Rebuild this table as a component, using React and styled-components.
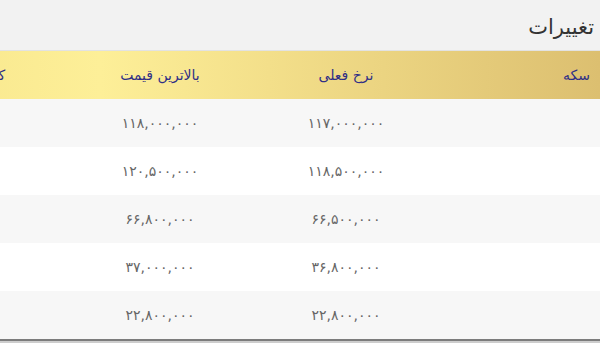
import styled, { createGlobalStyle } from 'styled-components';

const GlobalStyle = createGlobalStyle`
  html, body {
    margin: 0;
    padding: 0;
    background: #cdcdcd;
  }
  body {
    font-family: "DejaVu Sans", "Noto Sans", sans-serif;
  }
`;

const columns = ['سکه', 'نرخ فعلی', 'بالاترین قیمت', 'کمترین قیمت'];

const rows = [
  { current: '۱۱۷,۰۰۰,۰۰۰', high: '۱۱۸,۰۰۰,۰۰۰' },
  { current: '۱۱۸,۵۰۰,۰۰۰', high: '۱۲۰,۵۰۰,۰۰۰' },
  { current: '۶۶,۵۰۰,۰۰۰', high: '۶۶,۸۰۰,۰۰۰' },
  { current: '۳۶,۸۰۰,۰۰۰', high: '۳۷,۰۰۰,۰۰۰' },
  { current: '۲۲,۸۰۰,۰۰۰', high: '۲۲,۸۰۰,۰۰۰' },
];

export default function App() {
  return (
    <>
      <GlobalStyle />
      <Panel>
        <TitleBar>
          <Title>تغییرات</Title>
        </TitleBar>
        <TableWrap>
          <Table>
            <HeadRow>
              {columns.map((label, i) => (
                <HeadCell key={label} $first={i === 0}>
                  {label}
                </HeadCell>
              ))}
            </HeadRow>
            {rows.map((row, i) => (
              <Row key={i} $striped={i % 2 === 0}>
                <Cell />
                <Cell>{row.current}</Cell>
                <Cell>{row.high}</Cell>
                <Cell />
              </Row>
            ))}
          </Table>
        </TableWrap>
      </Panel>
    </>
  );
}

const Panel = styled.div`
  direction: rtl;
  width: 600px;
  background: #f2f2f2;
  border-bottom: 2px solid #7c7c7c;
`;

const TitleBar = styled.div`
  display: flex;
  align-items: center;
  height: 51px;
  padding-right: 6px;
  padding-top: 4px;
  box-sizing: border-box;
  border-bottom: 1px solid #e2e2e2;
`;

const Title = styled.h1`
  margin: 0;
  font-size: 21px;
  font-weight: normal;
  color: #333;
`;

const TableWrap = styled.div`
  overflow: hidden;
`;

const Table = styled.div`
  display: flex;
  flex-direction: column;
  width: 735px;
`;

const HeadRow = styled.div`
  display: grid;
  grid-template-columns: 161px 186px 186px 202px;
  height: 48px;
  align-items: center;
  background: linear-gradient(to left, #dcbf70 0%, #f3df8a 45%, #fdef98 68%, #f6e489 100%);
`;

const HeadCell = styled.div`
  text-align: ${({ $first }) => ($first ? 'right' : 'center')};
  padding-right: ${({ $first }) => ($first ? '10px' : '0')};
  font-size: 14px;
  color: #2f2f86;
  white-space: nowrap;
`;

const Row = styled.div`
  display: grid;
  grid-template-columns: 161px 186px 186px 202px;
  height: 48px;
  align-items: center;
  background: ${({ $striped }) => ($striped ? '#f7f7f7' : '#ffffff')};
`;

const Cell = styled.div`
  text-align: center;
  font-size: 14px;
  color: #666;
  white-space: nowrap;
`;
